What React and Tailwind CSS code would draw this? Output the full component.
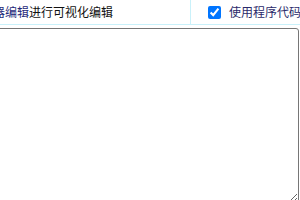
import React from 'react';

function App() {
  return (
    <div
      className="w-[300px] h-[200px] overflow-hidden bg-white"
      style={{ fontFamily: '"Noto Sans CJK SC", "Noto Sans", sans-serif' }}
    >
      <div className="flex h-[25px] border-b border-[#c9f1fa]">
        <div className="flex-1 flex items-center min-w-0 overflow-hidden">
          <span className="-ml-[7px] whitespace-nowrap text-[12px] leading-none text-[#111]">
            <span className="text-[#1f2a7a]">器编辑</span>进行可视化编辑
          </span>
        </div>
        <div className="w-[110px] border-l border-[#c9f1fa] flex items-center pl-[17px]">
          <input
            type="checkbox"
            defaultChecked
            className="w-[13px] h-[13px] m-0 accent-[#0075ff] shrink-0"
          />
          <span className="ml-[8px] whitespace-nowrap text-[12px] leading-none text-[#2a2a6a]">
            使用程序代码
          </span>
        </div>
      </div>
      <textarea
        className="block mt-[3px] -ml-[10px] w-[309px] h-[175px] border border-[#767676] rounded-[3px] resize bg-white outline-none"
      />
    </div>
  );
}

export default App;
